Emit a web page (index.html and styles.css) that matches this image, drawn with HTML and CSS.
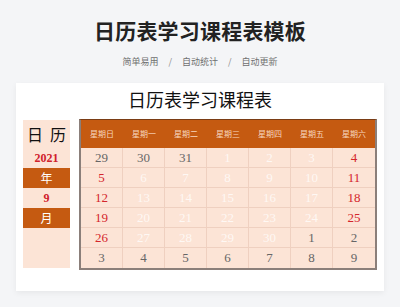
FILE: index.html
```html
<!DOCTYPE html>
<html lang="zh">
<head>
<meta charset="utf-8">
<link rel="stylesheet" href="styles.css">
</head>
<body>
<div class="page">
  <h1 class="main-title">日历表学习课程表模板</h1>
  <div class="sub">
    <span>简单易用</span><span class="sep">/</span><span>自动统计</span><span class="sep">/</span><span>自动更新</span>
  </div>
  <div class="card">
    <div class="card-title">日历表学习课程表</div>
    <div class="card-body">
      <div class="side">
        <div class="side-title">日&nbsp;&nbsp;历</div>
        <div class="side-num">2021</div>
        <div class="side-bar">年</div>
        <div class="side-num">9</div>
        <div class="side-bar">月</div>
      </div>
      <div class="cal">
        <div class="head">
          <div>星期日</div><div>星期一</div><div>星期二</div><div>星期三</div><div>星期四</div><div>星期五</div><div>星期六</div>
        </div>
        <div class="grid">
          <div class="g">29</div><div class="g">30</div><div class="g">31</div><div class="w">1</div><div class="w">2</div><div class="w">3</div><div class="r">4</div>
          <div class="r">5</div><div class="w">6</div><div class="w">7</div><div class="w">8</div><div class="w">9</div><div class="w">10</div><div class="r">11</div>
          <div class="r">12</div><div class="w">13</div><div class="w">14</div><div class="w">15</div><div class="w">16</div><div class="w">17</div><div class="r">18</div>
          <div class="r">19</div><div class="w">20</div><div class="w">21</div><div class="w">22</div><div class="w">23</div><div class="w">24</div><div class="r">25</div>
          <div class="r">26</div><div class="w">27</div><div class="w">28</div><div class="w">29</div><div class="w">30</div><div class="g">1</div><div class="g">2</div>
          <div class="g">3</div><div class="g">4</div><div class="g">5</div><div class="g">6</div><div class="g">7</div><div class="g">8</div><div class="g">9</div>
        </div>
      </div>
    </div>
  </div>
</div>
</body>
</html>
```

FILE: styles.css
```css
html, body {
  margin: 0;
  padding: 0;
  background: #f4f5f7;
}
.page {
  width: 400px;
  height: 307px;
  overflow: hidden;
  padding-top: 18px;
  box-sizing: border-box;
  font-family: "Noto Sans CJK SC", "Noto Sans", sans-serif;
}
.main-title {
  margin: 0;
  text-align: center;
  font-size: 21px;
  line-height: 24px;
  font-weight: 700;
  color: #222;
  letter-spacing: 0.2px;
}
.sub {
  margin-top: 13px;
  display: flex;
  justify-content: center;
  gap: 10px;
  font-size: 9px;
  line-height: 14px;
  color: #707070;
}
.sep {
  color: #8a8a8a;
}
.card {
  margin: 14px 16px 0;
  height: 208px;
  background: #fff;
  box-shadow: 0 2px 6px rgba(0, 0, 0, 0.06);
}
.card-title {
  height: 36px;
  line-height: 32px;
  text-align: center;
  font-size: 18px;
  color: #111;
}
.card-body {
  display: flex;
  padding: 0 7px 0 7px;
  gap: 9px;
}
.side {
  width: 47px;
  margin-top: 1px;
  height: 148px;
  background: #fce4d6;
  display: flex;
  flex-direction: column;
}
.side-title {
  height: 28px;
  line-height: 28px;
  text-align: center;
  font-size: 16px;
  color: #111;
}
.side-num {
  height: 20px;
  line-height: 20px;
  text-align: center;
  font-family: "Liberation Serif", serif;
  font-weight: 700;
  font-size: 12px;
  color: #d0202a;
}
.side-bar {
  height: 20px;
  line-height: 20px;
  text-align: center;
  background: #c55a11;
  color: #fff;
  font-size: 12px;
}
.cal {
  width: 298px;
  box-sizing: border-box;
  border-left: 2px solid #8b7f7a;
  border-right: 2px solid #8b7f7a;
  border-bottom: 2px solid #8b7f7a;
  border-top: 1px solid #7a3c14;
  background: #fce4d6;
}
.head {
  display: grid;
  grid-template-columns: repeat(7, 1fr);
  height: 28px;
  background: #c55a11;
}
.head div {
  line-height: 28px;
  text-align: center;
  font-size: 8px;
  color: #f7d6bf;
}
.grid {
  display: grid;
  grid-template-columns: repeat(7, 1fr);
  grid-auto-rows: 20px;
}
.grid div {
  line-height: 20px;
  text-align: center;
  font-family: "Liberation Serif", serif;
  font-size: 13px;
  border-right: 1px solid #efd0c0;
  border-bottom: 1px solid #efd0c0;
  box-sizing: border-box;
}
.grid div:nth-child(7n) {
  border-right: none;
}
.grid div:nth-last-child(-n+7) {
  border-bottom: none;
}
.g { color: #666; }
.w { color: rgba(255, 255, 255, 0.75); }
.r { color: #d4262c; }
```
